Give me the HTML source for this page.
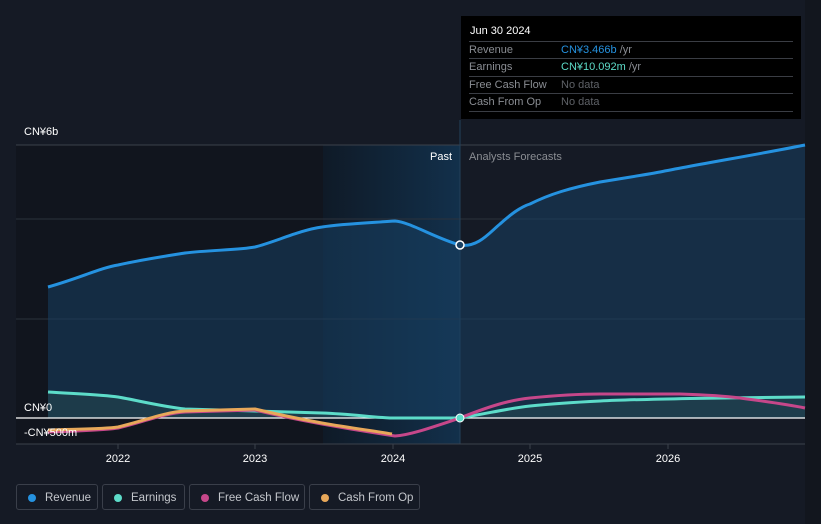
<!DOCTYPE html><html><head><style>
body{margin:0;width:821px;height:524px;background:#151a25;font-family:"Liberation Sans",sans-serif;overflow:hidden;position:relative}
.tt{position:absolute;left:461px;top:16px;width:340px;height:103px;background:#000;color:#fff;font-size:11px}
.tt .h{position:absolute;left:9px;top:9px;font-size:11px}
.row{position:absolute;left:8px;width:324px;border-top:1px solid #3a3d44;height:17px;line-height:17px;color:#8a8d93}
.row span{position:absolute;left:92px}
.leg{position:absolute;top:484px;height:26px;border:1px solid #3a3f4a;border-radius:3px;color:#c4c7cc;font-size:11.5px;line-height:26px;box-sizing:border-box}
.leg i{position:absolute;left:11px;top:9px;width:8px;height:8px;border-radius:50%}
.leg b{font-weight:normal;position:absolute;left:28px}
</style></head><body>
<svg width="821" height="524" style="position:absolute;left:0;top:0">
<defs><linearGradient id="pb" x1="0" x2="1"><stop offset="0" stop-color="#0f1a27"/><stop offset="1" stop-color="#12304b"/></linearGradient></defs>
<rect x="16" y="145" width="444" height="299" fill="#11151e"/>
<rect x="323" y="145" width="137" height="299" fill="url(#pb)"/>
<rect x="805" y="0" width="16" height="524" fill="#12161e"/>
<line x1="16" y1="145" x2="805" y2="145" stroke="#3c414b"/>
<line x1="16" y1="219" x2="805" y2="219" stroke="#2c323c"/>
<line x1="16" y1="319" x2="805" y2="319" stroke="#2c323c"/>
<line x1="460" y1="120" x2="460" y2="444" stroke="#24415a"/>
<path d="M48,287 C80,278 100,268 118,265 C140,260 160,257 185,253 C210,250 240,250 255,247 C275,242 300,230 322,227 C340,224 365,223 395,221 C410,222 435,238 460,245 C478,248 490,232 500,224 C510,215 520,207 530,204 C550,194 570,188 600,182 C630,177 650,174 660,172 C700,164 760,154 805,145 L805,418 L48,418 Z" fill="#173f62" fill-opacity="0.55"/>
<path d="M48,287 C80,278 100,268 118,265 C140,260 160,257 185,253 C210,250 240,250 255,247 C275,242 300,230 322,227 C340,224 365,223 395,221 C410,222 435,238 460,245 C478,248 490,232 500,224 C510,215 520,207 530,204 C550,194 570,188 600,182 C630,177 650,174 660,172 C700,164 760,154 805,145" fill="none" stroke="#2592e0" stroke-width="3"/>
<path d="M48,392 C80,394 105,395 118,397 C140,401 165,407 185,409 L255,411 L322,413 C350,414 370,417 390,418 L460,418 C490,413 510,408 530,406 C560,403 580,402 600,401 C640,399 700,398 805,397 L805,418 L48,418Z" fill="#2e5a5a" fill-opacity="0.35"/>
<line x1="16" y1="444" x2="805" y2="444" stroke="#3c414b"/>
<line x1="16" y1="418" x2="805" y2="418" stroke="#fff" stroke-width="1.2"/>
<path d="M48,392 C80,394 105,395 118,397 C140,401 165,407 185,409 L255,411 L322,413 C350,414 370,417 390,418 L460,418 C490,413 510,408 530,406 C560,403 580,402 600,401 C640,399 700,398 805,397" fill="none" stroke="#5ddcc9" stroke-width="3"/>
<path d="M48,432 C80,431 105,430 118,428 C140,423 165,413 185,412 L255,410 C280,416 300,420 322,424 C350,429 375,433 395,436 C410,435 430,428 460,418 C490,406 510,400 530,398 C560,395 580,394 600,394 L680,394 C710,395 725,396 740,398 C770,402 790,405 805,408" fill="none" stroke="#c6478a" stroke-width="3"/>
<path d="M48,430 C80,429 105,429 118,427 C140,422 165,412 185,411 L255,409 C280,415 300,419 322,423 C350,428 375,431 392,434" fill="none" stroke="#e8a85a" stroke-width="3"/>
<circle cx="460" cy="245" r="4" fill="#173f62" stroke="#fff" stroke-width="1.5"/>
<circle cx="460" cy="418" r="4" fill="#5ddcc9" stroke="#fff" stroke-width="1"/>
<g fill="#fff" font-size="11"><text x="24" y="135">CN¥6b</text><text x="24" y="411">CN¥0</text><text x="24" y="436">-CN¥500m</text>
<text x="430" y="160" font-size="11">Past</text><text x="469" y="160" fill="#8a8d93">Analysts Forecasts</text>
<text x="118" y="462" text-anchor="middle">2022</text><text x="255" y="462" text-anchor="middle">2023</text><text x="393" y="462" text-anchor="middle">2024</text><text x="530" y="462" text-anchor="middle">2025</text><text x="668" y="462" text-anchor="middle">2026</text></g>
<g stroke="#3c414b"><line x1="118" y1="444" x2="118" y2="449"/><line x1="255" y1="444" x2="255" y2="449"/><line x1="393" y1="444" x2="393" y2="449"/><line x1="530" y1="444" x2="530" y2="449"/><line x1="668" y1="444" x2="668" y2="449"/></g>
</svg>
<div class="tt"><div class="h">Jun 30 2024</div>
<div class="row" style="top:25px">Revenue<span style="color:#2592e0">CN¥3.466b <em style="font-style:normal;color:#8a8d93">/yr</em></span></div>
<div class="row" style="top:42px">Earnings<span style="color:#5ddcc9">CN¥10.092m <em style="font-style:normal;color:#8a8d93">/yr</em></span></div>
<div class="row" style="top:60px">Free Cash Flow<span style="color:#5e6167">No data</span></div>
<div class="row" style="top:77px;border-bottom:1px solid #3a3d44">Cash From Op<span style="color:#5e6167">No data</span></div>
</div>
<div class="leg" style="left:16px;width:82px"><i style="background:#2592e0"></i><b>Revenue</b></div>
<div class="leg" style="left:102px;width:83px"><i style="background:#5ddcc9"></i><b>Earnings</b></div>
<div class="leg" style="left:189px;width:116px"><i style="background:#c6478a"></i><b>Free Cash Flow</b></div>
<div class="leg" style="left:309px;width:111px"><i style="background:#e8a85a"></i><b>Cash From Op</b></div>
</body></html>
